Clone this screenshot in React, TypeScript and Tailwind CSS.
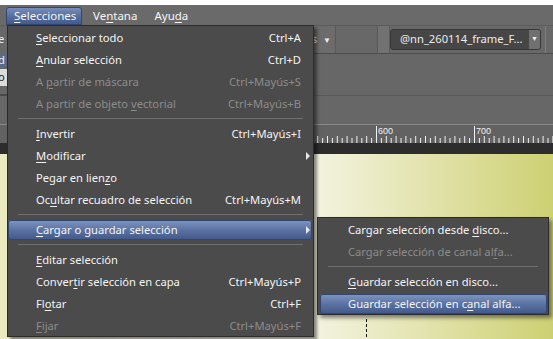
import React from "react";

type ItemProps = {
  label: string;
  shortcut?: string;
  disabled?: boolean;
  arrow?: boolean;
  active?: boolean;
  sub?: boolean;
};

// "&" marks the mnemonic letter, rendered underlined
function Mnemonic({ label }: { label: string }) {
  const i = label.indexOf("&");
  if (i < 0) return <>{label}</>;
  return (
    <>
      {label.slice(0, i)}
      <span className="underline underline-offset-[2px]">{label[i + 1]}</span>
      {label.slice(i + 2)}
    </>
  );
}

function Item({ label, shortcut, disabled, arrow, active, sub }: ItemProps) {
  const hl = active
    ? "bg-[linear-gradient(to_bottom,#8097c2,#5b73a3_50%,#41578a)] shadow-[inset_0_0_0_1px_#33466f] rounded-[3px]"
    : "";
  const pad = sub ? "ml-[2px] mr-[1px] pl-[28px] pr-[10px]" : "mr-[1px] pl-[28px] pr-[11px]";
  return (
    <div className="h-[22px] py-[1px]">
      <div className={`relative h-full flex items-center ${pad} ${hl}`}>
        <span className={`flex-1 whitespace-nowrap ${disabled ? "text-[#8b8b8b]" : "text-[#f4f4f4]"}`}>
          <Mnemonic label={label} />
        </span>
        {shortcut && (
          <span className={`whitespace-nowrap ${disabled ? "text-[#8b8b8b]" : "text-[#f4f4f4]"}`}>{shortcut}</span>
        )}
        {arrow && (
          <span className="absolute right-[2px] top-1/2 -translate-y-1/2 w-0 h-0 border-y-[4px] border-y-transparent border-l-[4px] border-l-[#e8e8e8]" />
        )}
      </div>
    </div>
  );
}

function Sep({ sub }: { sub?: boolean }) {
  return (
    <div className={`h-[8px] pt-[3px] ${sub ? "mx-[10px]" : "ml-[10px] mr-[10px]"}`}>
      <div className="h-px bg-[#6e6e6e]" />
    </div>
  );
}

function Ruler() {
  const ticks = [];
  // 100 units = 98px, label 600 at x=376
  for (let u = 530; u <= 780; u += 5) {
    const x = 376 + ((u - 600) * 98) / 100;
    const major = u % 100 === 0;
    const tall = u % 10 === 0;
    ticks.push(
      <line
        key={u}
        x1={x + 0.5}
        x2={x + 0.5}
        y1={major ? 1 : tall ? 11 : 13}
        y2={18}
        stroke="#f0f0f0"
        strokeWidth={1}
      />
    );
    if (major)
      ticks.push(
        <text key={"t" + u} x={x + 2} y={9} fill="#f0f0f0" fontSize="9" fontFamily="Liberation Sans, sans-serif">
          {u}
        </text>
      );
  }
  return (
    <svg width="553" height="18" className="block">
      {ticks}
    </svg>
  );
}

export default function App() {
  return (
    <div className="relative w-[553px] h-[339px] overflow-hidden bg-white font-['Noto_Sans',sans-serif] text-[11.2px] select-none">
      {/* App background */}
      <div className="flex flex-col h-full">
        <div className="h-[5px] bg-white" />

        {/* Menu bar */}
        <div className="h-[20px] bg-[#6a6a6a] flex items-end text-[#f6f6f6] text-[11.5px]">
          <div className="ml-[6px] h-[18px] w-[76px] pl-[8px] flex items-center rounded-t-[3px] bg-[linear-gradient(to_bottom,#7a91bd,#566e9e_55%,#41578a)] shadow-[inset_0_0_0_1px_#34476f]">
            <Mnemonic label="&Selecciones" />
          </div>
          <div className="ml-[11px] h-[18px] flex items-center">
            <Mnemonic label="Ve&ntana" />
          </div>
          <div className="ml-[17px] h-[18px] flex items-center">
            <Mnemonic label="Ayu&da" />
          </div>
        </div>

        {/* Toolbar */}
        <div className="h-[29px] bg-[#686868] border-t border-[#5c5c5c] border-b border-b-[#4c4c4c] flex items-stretch text-[#eeeeee]">
          <div className="w-[8px] -ml-[2px] flex items-center">e</div>
          <div className="ml-[240px] w-[90px] border-x border-[#595959] bg-[#6c6c6c] flex items-center justify-end pr-[4px] gap-[6px]">
            <span>s</span>
            <span className="text-[8px] mt-[1px]">▼</span>
          </div>
          <div className="ml-[41px] w-[13px] border-x border-[#5a5a5a] bg-[#727272]" />
          <div className="my-[3px] w-[151px] rounded-[3px] bg-[#464646] border border-[#383838] flex items-center">
            <span className="flex-1 pl-[9px] text-[#ececec] whitespace-nowrap">@nn_260114_frame_F...</span>
            <span className="w-[11px] h-full bg-[#707070] rounded-r-[2px] flex items-center justify-center text-[7px] text-[#eee]">▼</span>
          </div>
          <div className="ml-[4px] w-px bg-[#808080]" />
        </div>

        {/* Palette area */}
        <div className="h-[70px] bg-[#676767] flex">
          <div className="w-[8px] flex flex-col text-[#eeeeee]">
            <div className="mt-[-1px] h-[14px] -ml-[2px] bg-[#5b6b86] flex items-center">d</div>
            <div className="mt-[2px] h-[17px] bg-[#dcdcdc] text-[#222] flex items-center -ml-[3px] pl-[1px]">o</div>
            <div className="mt-[8px] h-[2px] bg-[#4a4a4a]" />
          </div>
          <div className="flex-1 flex flex-col">
            <div className="h-[41px]" />
            <div className="h-px bg-[#5a5a5a]" />
          </div>
        </div>

        {/* Ruler */}
        <div className="h-px bg-[#8a8a8a]" />
        <div className="h-[18px] bg-[#626262]">
          <Ruler />
        </div>
        <div className="h-[11px] bg-[#2d2d2d]" />

        {/* Canvas */}
        <div className="relative flex-1 bg-[linear-gradient(to_right,#ebebbf_0%,#f3f3df_40%,#f3f3e0_57%,#e4e5b2_75%,#cdd072_100%)]">
          <div className="absolute left-[366px] top-[165px] bottom-0 w-px bg-[repeating-linear-gradient(to_bottom,#111_0px,#111_3px,transparent_3px,transparent_5px)]" />
        </div>
      </div>

      {/* Main dropdown menu */}
      <div className="absolute left-[7px] top-[25px] w-[307px] h-[312px] bg-[#4b4b4b] border border-[#2c2c2c] pt-px shadow-[3px_3px_3px_rgba(0,0,0,0.45)]">
        <Item label="&Seleccionar todo" shortcut="Ctrl+A" />
        <Item label="&Anular selección" shortcut="Ctrl+D" />
        <Item label="A &partir de máscara" shortcut="Ctrl+Mayús+S" disabled />
        <Item label="A partir de objeto &vectorial" shortcut="Ctrl+Mayús+B" disabled />
        <Sep />
        <Item label="&Invertir" shortcut="Ctrl+Mayús+I" />
        <Item label="&Modificar" arrow />
        <Item label="Pegar en lien&zo" />
        <Item label="Oc&ultar recuadro de selección" shortcut="Ctrl+Mayús+M" />
        <Sep />
        <Item label="&Cargar o guardar selección" arrow active />
        <Sep />
        <Item label="&Editar selección" />
        <Item label="Conver&tir selección en capa" shortcut="Ctrl+Mayús+P" />
        <Item label="Fl&otar" shortcut="Ctrl+F" />
        <Item label="&Fijar" shortcut="Ctrl+Mayús+F" disabled />
      </div>

      {/* Submenu */}
      <div className="absolute left-[317px] top-[217px] w-[232px] h-[98px] bg-[#4b4b4b] border border-[#2c2c2c] pt-px shadow-[3px_3px_4px_rgba(0,0,0,0.45)]">
        <Item sub label="Cargar selección desde &disco..." />
        <Item sub label="Cargar selección de canal al&fa..." disabled />
        <Sep sub />
        <Item sub label="&Guardar selección en disco..." />
        <Item sub label="Guardar selección en c&anal alfa..." active />
      </div>
    </div>
  );
}
